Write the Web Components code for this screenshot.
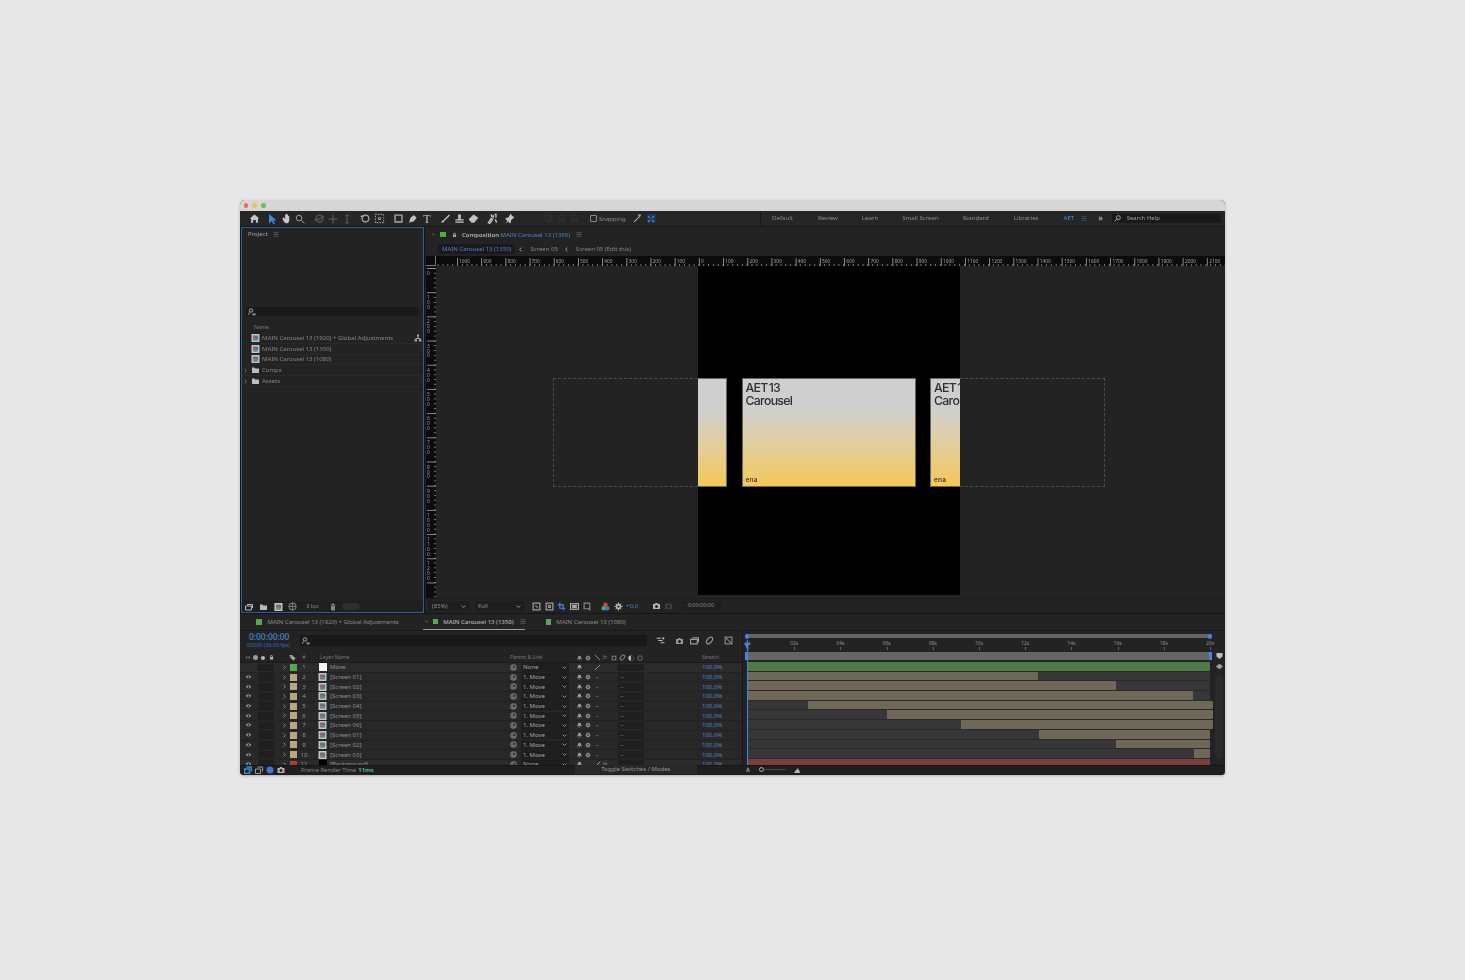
<!doctype html>
<html>
<head>
<meta charset="utf-8">
<title>After Effects</title>
<style>
  html, body { margin: 0; height: 100%; background: #e8e7e8; overflow: hidden; }
  body { padding: 200px 0 0 240px; box-sizing: border-box; font-family: "Noto Sans", sans-serif; }
</style>
</head>
<body>
<ae-window>
  <ae-toolbar></ae-toolbar>
  <ae-project slot="project"></ae-project>
  <ae-comp slot="comp"></ae-comp>
  <ae-timeline slot="timeline"></ae-timeline>
</ae-window>
<script>
const svg = (w, h, body, vb = '0 0 16 16') =>
  `<svg width="${w}" height="${h}" viewBox="${vb}" style="display:block">${body}</svg>`

const ICON = {
  home: 'M1 8 8 2l7 6h-2v6h-3v-4H6v4H3V8z',
  arrow: 'M4 1v13l3.5-3.2L10 15l2-1-2.5-4H14z',
  hand: 'M3 8c-1-1 0-3 1.5-1L6 9V3c0-1.5 1.5-1.5 1.5 0V2c0-1 1.500-1 1.500 0v1c0-1 1.500-1 1.500.5V5c0-1 1.500-1 1.500.5V10c0 3-2 5-4 5-3 0-4-3-6-7z',
  rect: 'M2 2h12v12H2zM4 4v8h8V4z',
  pen: 'M3 14 5 7l5-4 4 4-4 5zM7 8l2 2',
  brush: 'M2 14c0-2 1-3 2.5-3L13 2l1.5 1.5L6 12c0 2-2 2-4 2z',
  stamp: 'M6 2h4v3L9.5 9H14v2H2V9h4.5L6 5zM2 12.5h12V14H2z',
  eraser: 'M1 9 8 2l7 5-6 7H5z',
  roto: 'M2 14 6 8l2 2-4 5zM9 3v5M11 2h2v5M6 2l1 4M12 9l2 5',
  pin: 'M9 1l6 6-2 1-3 3v3l-2 1-2-3-4 4 3-5-3-2 1-2h3l2-3z',
  lock: 'M4 7V5a4 4 0 0 1 8 0v2h1v7H3V7zM6 7h4V5a2 2 0 0 0-4 0z',
  folder: 'M1 3h5l1 2h8v9H1z',
  trash: 'M3 3h10v2H3zM4 6h8v9H4zM6 1h4v2H6z',
  camera: 'M1 4h4l1-2h4l1 2h4v10H1zM8 6a3 3 0 1 0 .01 0z',
  tag: 'M1 2h6l8 8-5 5-8-8zM4 4v2h2V4z',
  shy: 'M4 8V6a4 4 0 0 1 8 0v2h2v2H2V8zM3 12h2v2H3zM7 12h2v2H7zM11 12h2v2h-2z',
  gear: 'M7 1h2v2l2 1 1.5-1.5 1 1L12 5l1 2h2v2h-2l-1 2 1.5 1.5-1 1L11 12l-2 1v2H7v-2l-2-1-1.5 1.5-1-1L4 11 3 9H1V7h2l1-2-1.5-1.5 1-1L5 4l2-1zM8 6a2 2 0 1 0 .01 0z',
  net: 'M6 1h4v4H6zM7 5h2v3h4v3h2v4h-5v-4h1V10H5v1h1v4H1v-4h2V8h4z',
  eye: 'M1 8c3-5 11-5 14 0-3 5-11 5-14 0zM8 5a3 3 0 1 0 .01 0z',
  shield: 'M1 1h14v8l-7 6-7-6z',
  nav: 'M0 8l4-4v8zM16 8l-4-4v8zM5 3h6v10H5z'
}
const solid = (name, w, h, color = '#a8a8a8') => svg(w, h, `<path fill="${color}" fill-rule="evenodd" d="${ICON[name]}"/>`)
const comp = (w = 9, h = 8) => svg(w, h,
  '<rect width="16" height="16" fill="#c4c4c4"/><rect x="3" y="3" width="10" height="10" fill="#6f7f90"/><circle cx="6" cy="6" r="2.5" fill="#c84a3c"/><circle cx="11" cy="7" r="2.5" fill="#3d6fc0"/><circle cx="8" cy="11" r="2.5" fill="#4ba35a"/>')
const stroke = (body, w = 11, h = 11, color = '#a8a8a8', sw = 1.5) =>
  svg(w, h, `<g fill="none" stroke="${color}" stroke-width="${sw}">${body}</g>`)
const menu = (color = '#8a8a8a') => svg(6, 5, `<path stroke="${color}" stroke-width="1.5" d="M0 2h16M0 8h16M0 14h16"/>`)
const chevron = (color = '#9a9a9a') => stroke('<path d="M5 2l6 6-6 6"/>', 5, 5, color, 3)
const down = () => stroke('<path d="M2 5l6 6 6-6"/>', 5, 5, '#9a9a9a', 3)
const BASE = `
  :host { box-sizing: border-box; }
  * { box-sizing: border-box; }
  svg { flex: none; }
`

class AeWindow extends HTMLElement {
  constructor() {
    super()
    this.attachShadow({ mode: 'open' }).innerHTML = `
      <style>${BASE}
        :host { display: flex; flex-direction: column; width: 985px; height: 575px; border-radius: 5px 5px 4px 4px;
          overflow: hidden; background: #141414; box-shadow: 0 1px 3px rgba(0,0,0,.25); font: 6px/1 "Noto Sans", sans-serif;
          color: #9b9b9b; filter: blur(.25px); }
        .title { height: 11px; background: #d7d6d5; display: flex; align-items: center; gap: 4.3px; padding-left: 3.5px; flex: none; }
        .title i { width: 4.5px; height: 4.5px; border-radius: 50%; }
        .main { display: flex; height: 386px; flex: none; }
      </style>
      <div class="title"><i style="background:#ec6a5e"></i><i style="background:#f4bf4f"></i><i style="background:#61c554"></i></div>
      <slot></slot>
      <div class="main"><slot name="project"></slot><slot name="comp"></slot></div>
      <slot name="timeline"></slot>`
  }
}

class AeToolbar extends HTMLElement {
  constructor() {
    super()
    const dim = '#555'
    const groups = [
      [solid('home', 11, 11, '#c4c4c4')],
      [solid('arrow', 12, 12, '#3f86dc'), solid('hand', 11, 11, '#c8c8c8'),
        stroke('<circle cx="6.5" cy="6.5" r="4.5"/><path d="M10 10l5 5"/>', 10, 10, '#a0a0a0')],
      [stroke('<circle cx="8" cy="8" r="5"/><path d="M1 11 15 5"/>', 11, 11, dim, 2),
        stroke('<path d="M8 1v14M1 8h14"/>', 10, 10, dim, 2), stroke('<path d="M5 2h6M8 2v12M5 14h6"/>', 10, 10, dim, 2)],
      [stroke('<path d="M3 4v4a5 5 0 1 0 2-4zM1 5h5"/>', 11, 11, '#a8a8a8', 1.8),
        stroke('<rect x="2" y="2" width="12" height="12" stroke-dasharray="2 2"/><circle cx="8" cy="8" r="1.5"/>', 11, 11)],
      [solid('rect', 11, 11), solid('pen', 11, 11, '#c0c0c0'), `<span class="t">T</span>`],
      [solid('brush', 11, 11, '#c4c4c4'), solid('stamp', 11, 11, '#c4c4c4'), solid('eraser', 11, 11, '#c4c4c4')],
      [stroke(`<path d="${ICON.roto}"/>`, 11, 11, '#c4c4c4', 2), solid('pin', 11, 11, '#c4c4c4')]
    ]
    const margins = [0, 4, 5, 4, 5, 5, 5]
    const tabs = [['Default', 0], ['Review', 25], ['Learn', 24], ['Small Screen', 24], ['Standard', 24], ['Libraries', 25]]
    this.attachShadow({ mode: 'open' }).innerHTML = `
      <style>${BASE}
        :host { display: flex; align-items: center; height: 16px; flex: none; background: #262626; padding-left: 7px;
          border-bottom: 1px solid #171717; white-space: nowrap; }
        .g { display: flex; }
        .c { width: 14px; height: 14px; display: flex; align-items: center; justify-content: center; }
        .t { font: 12px/1 "Liberation Serif", serif; color: #c0c0c0; margin-left: 2px; }
        .sn { display: flex; align-items: center; gap: 2px; width: 66px; color: #8d8d8d; }
        .box { width: 7px; height: 7px; border: 1px solid #8a8a8a; border-radius: 1px; }
        .blue { width: 9px; height: 9px; background: #1c3554; display: flex; align-items: center; justify-content: center; margin-left: 3px; }
        .tabs { display: flex; align-items: center; height: 100%; margin-left: 104px; border-left: 1px solid #171717; padding-left: 11px; color: #8d8d8d; font-size: 6.1px; }
        .tabs span { display: block; }
        .aet { color: #4a8ad4; margin-left: 25px; }
        .search { width: 109px; height: 9px; background: #191919; display: flex; align-items: center; gap: 6px; padding-left: 2px; color: #a2a2a2; font-size: 5.9px; }
      </style>
      ${groups.map((g, i) => `<div class="g" style="margin-left:${margins[i]}px;${i === 6 ? 'gap:3px' : ''}">${g.map((x) => `<div class="c">${x}</div>`).join('')}</div>`).join('')}
      <div class="g" style="margin-left:25px">
        ${[0, 1, 2].map(() => `<div class="c" style="opacity:.5;margin-right:-1px">${stroke('<path d="M3 3h10v10H3zM5 13l4-6 3 6"/>', 9, 9, '#444')}</div>`).join('')}
      </div>
      <div class="sn" style="margin-left:10px"><i class="box"></i><span>Snapping</span>
        <span style="margin-left:5px">${stroke('<path d="M2 14 13 3M9 2l5 0"/>', 9, 9, '#aaa', 2)}</span>
        <span class="blue">${stroke('<path d="M2 2l4 4M14 2l-4 4M2 14l4-4M14 14l-4-4"/>', 8, 8, '#4a8ad4', 2.5)}</span></div>
      <div class="tabs">
        ${tabs.map(([t, m]) => `<span style="margin-left:${m}px">${t}</span>`).join('')}
        <span class="aet">AET</span>
        <span style="margin-left:7px">${menu('#3f78bd')}</span>
        <span style="margin-left:11px;font-size:8px;color:#b0b0b0;margin-top:-2px;font-weight:600">»</span>
        <div class="search" style="margin-left:9px">${stroke('<circle cx="10" cy="6" r="4.5"/><path d="M6.5 9.5 1 15"/>', 7, 7, '#b5b5b5', 2)}<span>Search Help</span></div>
      </div>`
  }
}

class AeProject extends HTMLElement {
  constructor() {
    super()
    const rows = [
      [comp(), 'MAIN Carousel 13 (1920) + Global Adjustments', true],
      [comp(), 'MAIN Carousel 13 (1350)'],
      [comp(), 'MAIN Carousel 13 (1080)'],
      [solid('folder', 9, 8, '#bdbdbd'), 'Comps', false, true],
      [solid('folder', 9, 8, '#bdbdbd'), 'Assets', false, true]
    ]
    this.attachShadow({ mode: 'open' }).innerHTML = `
      <style>${BASE}
        :host { display: flex; flex-direction: column; width: 183px; height: 386px; margin-left: 1px; background: #232323;
          border: 1px solid #2f5f98; }
        .h { height: 12px; display: flex; align-items: center; gap: 5px; padding-left: 6px; color: #a5a5a5; flex: none; }
        .spacer { height: 67px; flex: none; }
        .s { height: 9px; margin: 0 4px; background: #191919; display: flex; align-items: center; padding-left: 2px; flex: none; }
        .name { height: 10px; margin-top: 7px; padding-left: 12px; font-size: 5.2px; color: #7c7c7c; flex: none; display: flex; align-items: center; }
        .r { height: 10.8px; display: flex; align-items: center; padding-left: 9px; gap: 2px; color: #868686; position: relative;
          border-bottom: 1px solid #292929; flex: none; white-space: nowrap; }
        .r .ch { position: absolute; left: 1px; top: 3px; }
        .r .net { position: absolute; right: 1px; top: 1px; }
        .grow { flex: 1; }
        .f { height: 11px; display: flex; align-items: center; background: #1f1f1f; flex: none; color: #7f7f7f; }
        .f span { display: flex; width: 14.5px; justify-content: center; }
      </style>
      <div class="h"><span>Project</span>${menu()}</div>
      <div class="spacer"></div>
      <div class="s">${stroke('<circle cx="6" cy="5" r="3.5"/><path d="M3 9 0 14M9 12h6l-3 3z"/>', 8, 8, '#aaa', 2)}</div>
      <div class="name">Name</div>
      ${rows.map(([ic, t, net, folder]) => `<div class="r">${folder ? `<span class="ch">${chevron('#777')}</span>` : ''}${ic}<span>${t}</span>${net ? `<span class="net">${solid('net', 8, 8, '#a8a8a8')}</span>` : ''}</div>`).join('')}
      <div class="grow"></div>
      <div class="f">
        <span>${stroke('<path d="M1 6h12v8H1zM4 3h11v7"/>', 10, 8, '#b8b8b8', 2)}</span>
        <span>${solid('folder', 9, 8, '#b8b8b8')}</span>
        <span>${comp()}</span>
        <span>${stroke('<circle cx="8" cy="8" r="6"/><path d="M1 8h14M8 1v14"/>', 9, 9, '#777', 2)}</span>
        <span style="width:26px;font-size:5.2px;align-items:center;height:100%;line-height:11px">8 bpc</span>
        <span>${solid('trash', 8, 8, '#858585')}</span>
        <i style="width:18px;height:7px;border-radius:4px;background:#2e2e2e;margin-left:1px"></i>
      </div>`
  }
}

class AeRuler extends HTMLElement {
  constructor() {
    super()
    const step = 24.2
    const vertical = this.hasAttribute('vertical')
    const labels = []
    if (vertical) {
      for (let i = 0; i < 13; i++) {
        labels.push(`<span style="top:${5 + i * step}px">${String(i * 100).split('').join('<br>')}</span>`)
      }
    } else {
      for (let i = 0; i < 32; i++) {
        labels.push(`<span style="left:${22 + i * step}px">${Math.abs(1000 - i * 100)}</span>`)
      }
    }
    this.attachShadow({ mode: 'open' }).innerHTML = `
      <style>${BASE}
        :host { display: block; position: relative; overflow: hidden; background-color: #0c0c0c; flex: none; color: #a0a0a0; font-size: 4.8px; line-height: 5px; }
        :host(:not([vertical])) { height: 10px; background-image:
          linear-gradient(90deg, #8c8c8c 1px, transparent 1px),
          linear-gradient(90deg, #777 1px, transparent 1px);
          background-size: ${step}px 8px, ${step / 5}px 2px; background-position: 21px 100%, 21px 100%; background-repeat: repeat-x; }
        :host([vertical]) { width: 10px; background-image:
          linear-gradient(#8c8c8c 1px, transparent 1px),
          linear-gradient(#777 1px, transparent 1px);
          background-size: 9px ${step}px, 2px ${step / 5}px; background-position: 100% 2px, 100% 2px; background-repeat: repeat-y; }
        span { position: absolute; top: 2.5px; padding-left: 1px; }
        :host([vertical]) span { left: 1px; text-align: center; padding: 0; line-height: 4.9px; }
      </style>${labels.join('')}`
  }
}

class AeComp extends HTMLElement {
  constructor() {
    super()
    const card = (w, text, extra = '') => `<div class="card" style="width:${w}px;${extra}">${text ? '<div class="ttl">AET 13<br>Carousel</div><div class="ena">ena</div>' : ''}</div>`
    this.attachShadow({ mode: 'open' }).innerHTML = `
      <style>${BASE}
        :host { display: flex; flex-direction: column; width: 800px; height: 386px; background: #232323; margin-left: 1px; }
        .h { height: 15px; display: flex; align-items: center; padding-left: 7px; flex: none; color: #b4b4b4; white-space: nowrap; }
        .green { width: 5.5px; height: 5.5px; background: #55a84f; display: block; }
        .h b { font-weight: 600; color: #b8b8b8; }
        .blue { color: #4a85c9; }
        .crumb { height: 14px; display: flex; align-items: center; flex: none; color: #858585; white-space: nowrap; }
        .crumb .on { background: #1a1a1a; color: #4a85c9; height: 10px; display: flex; align-items: center; padding: 0 4px; margin-left: 13px; }
        .rh { display: flex; height: 10px; flex: none; padding-left: 1px; }
        .corner { width: 10px; height: 10px; background: #0c0c0c; border-right: 1px solid #777; border-bottom: 1px solid #777; flex: none; }
        ae-ruler:not([vertical]) { flex: 1; }
        .vw { display: flex; height: 332px; flex: none; padding-left: 1px; }
        .stage { position: relative; flex: 1; padding-left: 262px; }
        .black { width: 262px; height: 329px; background: #000; overflow: hidden; display: flex; align-items: flex-start; padding-top: 112px; gap: 14.5px; }
        .frame { position: absolute; top: 112px; height: 109px; width: 145px; border: 1px dashed #4c4c4c; }
        .card { flex: none; height: 109px; position: relative; overflow: hidden; border: 1px solid #6d675a;
          background: linear-gradient(#cfcfcf 0, #cfcfcf 28%, #e0cfa2 58%, #f5c858 100%); color: #2e2e2e; }
        .ttl { position: absolute; left: 3px; top: 3px; font: 500 12.3px/12.7px Inter, sans-serif; letter-spacing: -.7px; word-spacing: -1.5px; white-space: nowrap; }
        .ena { position: absolute; left: 3px; bottom: 3px; font: 500 6.5px/1 Inter, sans-serif; letter-spacing: .3px; }
        .f { height: 15px; flex: none; display: flex; align-items: center; border-top: 1px solid #1c1c1c; color: #8d8d8d; white-space: nowrap; }
        .sel { height: 10px; background: #1e1e1e; display: flex; align-items: center; justify-content: space-between; padding: 0 4px; }
        .ib { display: flex; width: 12.8px; justify-content: center; }
      </style>
      <div class="h">${stroke('<path d="M3 3l10 10M13 3 3 13"/>', 3, 3, '#888', 3)}
        <i class="green" style="margin-left:5px"></i>
        <span style="margin-left:6px">${solid('lock', 5, 6, '#a5a5a5')}</span>
        <b style="margin-left:5.5px">Composition</b><span class="blue" style="margin-left:1.5px">MAIN Carousel 13 (1350)</span>
        <span style="margin-left:6px">${menu()}</span></div>
      <div class="crumb"><span class="on">MAIN Carousel 13 (1350)</span>
        <span style="margin:0 6px 0 3px;transform:scaleX(-1)">${chevron('#aaa')}</span><span style="margin-left:1px">Screen 05</span>
        <span style="margin:0 6px;transform:scaleX(-1)">${chevron('#aaa')}</span><span style="margin-left:1px">Screen 05 (Edit this)</span></div>
      <div class="rh"><div class="corner"></div><ae-ruler></ae-ruler></div>
      <div class="vw"><ae-ruler vertical></ae-ruler>
        <div class="stage">
          <div class="black">${card(29, false, 'border-left:0')}${card(174, true)}${card(60, true)}</div>
          <div class="frame" style="left:117px;border-right:0"></div>
          <div class="frame" style="left:524px;border-left:0"></div>
        </div></div>
      <div class="f">
        <div class="sel" style="width:42px;margin-left:3px"><span>(85%)</span>${down()}</div>
        <div class="sel" style="width:50px;margin-left:5px;padding-left:3px"><span>Full</span>${down()}</div>
        <div style="display:flex;margin-left:5px">
          <span class="ib">${stroke('<rect x="2" y="2" width="12" height="12"/><path d="M6 6l4 4"/>', 9, 9, '#aaa', 2)}</span>
          <span class="ib">${stroke('<rect x="2" y="2" width="12" height="12"/><circle cx="8" cy="8" r="2"/>', 9, 9, '#aaa', 2)}</span>
          <span class="ib">${stroke('<path d="M5 1v10h10M1 5h10v10"/>', 9, 9, '#4a8ad4', 2)}</span>
          <span class="ib">${stroke('<rect x="1" y="3" width="14" height="10"/><rect x="5" y="6" width="6" height="4" fill="#aaa"/>', 9, 9, '#aaa', 2)}</span>
          <span class="ib">${stroke('<path d="M2 2h10v10H2zM10 12l3 3"/>', 9, 9, '#888', 2)}</span>
        </div>
        <span style="margin-left:7px">${svg(9, 9, '<circle cx="8" cy="5" r="4" fill="#d6453a"/><circle cx="5" cy="11" r="4" fill="#4fae55"/><circle cx="11" cy="11" r="4" fill="#3f78d0"/>')}</span>
        <span style="margin-left:4px">${solid('gear', 9, 9, '#b5b5b5')}</span>
        <span class="blue" style="margin-left:3px">+0,0</span>
        <span style="margin-left:14px">${solid('camera', 9, 8, '#b5b5b5')}</span>
        <span style="margin-left:3px">${solid('camera', 9, 8, '#3d3d3d')}</span>
        <div class="sel" style="width:40px;margin-left:8px;justify-content:center;font-size:5.5px">0:00:00:00</div>
      </div>`
  }
}

const COLUMNS = '16px 2px 8px 8px 6px 8px 10px 12px 8px 9px 183px 7px 4px 48px 6px 8px 10px 8px 8px 9px 8px 9px 9px 58px 40px'

class AeLayer extends HTMLElement {
  connectedCallback() {
    const a = (k) => this.getAttribute(k)
    const solidLayer = a('kind') === 'solid'
    const cell = (x = '', cls = '') => `<div class="${cls}">${x}</div>`
    this.attachShadow({ mode: 'open' }).innerHTML = `
      <style>${BASE}
        :host { display: grid; grid-template-columns: ${COLUMNS}; height: 9.7px; align-items: center; background: #282828;
          border-bottom: 1px solid #222; color: #909090; white-space: nowrap; }
        :host([kind="solid"]) { background: #2b2b2b; }
        div { height: 100%; display: flex; align-items: center; justify-content: center; }
        .k { background: #1f1f1f; margin: .5px 0; height: auto; align-self: stretch; }
        .l { justify-content: flex-start; padding-left: 3px; }
        .sel { background: #1e1e1e; justify-content: space-between; padding: 0 2px; height: 8.5px; color: #a5a5a5; }
        .st { justify-content: flex-start; color: #4a85c9; }
        i { display: block; width: 7px; height: 7px; background: ${a('color')}; }
      </style>
      ${cell(a('n') === '1' ? '' : solid('eye', 7, 6, '#a8a8a8'))}${cell()}${cell('', 'k')}${cell('', 'k')}${cell()}
      ${cell(chevron('#8a8a8a'))}${cell('<i></i>')}${cell(a('n'))}${cell()}
      ${cell(solidLayer ? svg(8, 8, `<rect width="16" height="16" fill="${a('swatch')}"/>`) : comp())}
      ${cell(a('name'), 'l')}
      ${cell(stroke('<circle cx="8" cy="8" r="6"/><path d="M8 5a3 3 0 1 0 3 3"/>', 7, 7, '#777', 2.5))}${cell()}
      ${cell(`<span>${a('parent')}</span>${down()}`, 'sel')}${cell()}
      ${cell(solid('shy', 7, 6, '#a5a5a5'))}
      ${cell(solidLayer ? '' : solid('gear', 6, 6, '#9a9a9a'))}
      ${cell(solidLayer ? stroke('<path d="M2 14 14 2"/>', 7, 7, '#aaa', 2) : '–')}
      ${cell(a('fx') ? '<em style="font-size:6px">fx</em>' : '')}${cell()}
      ${cell(solidLayer ? '' : '–', 'k')}${cell('', 'k')}${cell('', 'k')}${cell()}${cell('100,0%', 'st')}`
  }
}

class AeTimeline extends HTMLElement {
  constructor() {
    super()
    const layers = [
      ['Move', '#55a84f', 'solid', 'None', '#f2f2f2', 747, 1210, '#4d7a4b'],
      ['[Screen 01]', '#b7a682', 'comp', '1. Move', '', 747, 1038, '#6f6757'],
      ['[Screen 02]', '#b7a682', 'comp', '1. Move', '', 747, 1116, '#6f6757'],
      ['[Screen 03]', '#b7a682', 'comp', '1. Move', '', 747, 1193, '#6f6757'],
      ['[Screen 04]', '#b7a682', 'comp', '1. Move', '', 808, 1213, '#6f6757'],
      ['[Screen 05]', '#b7a682', 'comp', '1. Move', '', 887, 1213, '#6f6757'],
      ['[Screen 06]', '#b7a682', 'comp', '1. Move', '', 961, 1213, '#6f6757'],
      ['[Screen 01]', '#b7a682', 'comp', '1. Move', '', 1039, 1210, '#6f6757'],
      ['[Screen 02]', '#b7a682', 'comp', '1. Move', '', 1116, 1210, '#6f6757'],
      ['[Screen 03]', '#b7a682', 'comp', '1. Move', '', 1194, 1210, '#6f6757'],
      ['[Background]', '#b03a36', 'solid', 'None', '#000', 747, 1210, '#7c3d3b']
    ]
    const ticks = ['0s', '02s', '04s', '06s', '08s', '10s', '12s', '14s', '16s', '18s', '20s']
    this.attachShadow({ mode: 'open' }).innerHTML = `
      <style>${BASE}
        :host { display: flex; flex-direction: column; flex: 1; min-height: 0; height: 162px; background: #232323; border-top: 1px solid #141414; white-space: nowrap; color: #8d8d8d; }
        .tabs { height: 17px; display: flex; align-items: center; flex: none; border-bottom: 1px solid #1a1a1a; }
        .green { width: 5.5px; height: 5.5px; background: #55a84f; display: block; flex: none; }
        .tab { display: flex; align-items: center; height: 100%; }
        .tab.on { color: #b6b6b6; border-bottom: 1.5px solid #a0a0a0; width: 102px; margin-left: 24px; padding-left: 2px; font-weight: 500; }
        .body { flex: 1; display: flex; min-height: 0; }
        .left { width: 503px; display: flex; flex-direction: column; overflow: hidden; border-right: 1px solid #161616; flex: none; }
        .ctl { height: 22px; flex: none; display: flex; position: relative; }
        .tc { width: 60px; padding: 1px 0 0 9px; flex: none; }
        .tc b { display: block; font-size: 8.4px; font-weight: 500; color: #4a8ad4; line-height: 10px; }
        .tc small { display: block; font-size: 5.4px; line-height: 6px; color: #3a6ca8; margin-left: -2px; }
        .sb { width: 347px; height: 11px; background: #191919; margin-top: 4px; display: flex; align-items: center; padding-left: 2px; flex: none; }
        .ic { display: flex; align-items: center; height: 11px; margin-top: 4px; margin-left: 6px; }
        .ic span { display: flex; width: 15px; justify-content: center; }
        .hd { display: grid; grid-template-columns: ${COLUMNS}; height: 10px; flex: none; align-items: center; font-size: 5.2px; color: #777; border-bottom: 1px solid #1a1a1a; }
        .hd div { display: flex; justify-content: center; align-items: center; }
        .hd .l { justify-content: flex-start; }
        .rows { flex: 1; overflow: hidden; min-height: 0; }
        .right { flex: 1; display: flex; flex-direction: column; position: relative; overflow: hidden; }
        .nav { height: 9px; flex: none; padding: 3px 13px 0 2px; position: relative; }
        .nav i { display: block; height: 4px; background: #666; border-radius: 2px; position: relative; }
        .nav i::before, .nav i::after { content: ""; position: absolute; top: -.5px; width: 4px; height: 5px; border-radius: 50%; background: #3f86dc; }
        .nav i::before { left: 0; } .nav i::after { right: 0; }
        .time { height: 12px; flex: none; margin: 0 13px 0 0; position: relative; font-size: 5px; color: #909090; }
        .time span { position: absolute; top: 1px; transform: translateX(-50%); padding-bottom: 4px; }
        .time span::after { content: ""; position: absolute; left: 50%; bottom: 0; height: 3px; width: 1px; background: #666; }
        .work { height: 8px; flex: none; background: #666; margin: 0 13px 2px 2px; position: relative;
          border-left: 3px solid #3f86dc; border-right: 3px solid #3f86dc; }
        .tracks { flex: 1; min-height: 0; overflow: hidden; }
        .tr { height: 9.7px; background: #373737; border-bottom: 1px solid #2a2a2a; margin: 0 15px 0 4px; display: flex; }
        .tr b { display: block; height: 8.7px; border-radius: 0 1px 1px 0; flex: none; }
        .head { position: absolute; left: 1px; top: 9px; width: 0; height: 125px; border-left: 1px solid #3f86dc; margin-left: 3px; }
        .head::before { content: ""; position: absolute; left: -4px; top: 3px; border: 3.5px solid transparent; border-top: 6px solid #3f86dc; }
        .side { position: absolute; right: 0; top: 21px; width: 12px; display: flex; flex-direction: column; gap: 3px; align-items: center; }
        .scroll { position: absolute; right: 2px; top: 44px; width: 8px; height: 84px; background: #2a2a2a; border-radius: 3px; }
        .f { height: 10px; flex: none; background: #1f1f1f; display: flex; align-items: center; border-top: 1px solid #161616; padding: 0 0 2px 2px; }
        .f .bi { display: flex; width: 11px; justify-content: center; }
      </style>
      <div class="tabs">
        <span class="green" style="margin-left:16px"></span><span style="margin-left:6px">MAIN Carousel 13 (1920) + Global Adjustments</span>
        <div class="tab on">${stroke('<path d="M3 3l10 10M13 3 3 13"/>', 3, 3, '#888', 3)}<i class="green" style="margin-left:5px"></i><span style="margin-left:5px">MAIN Carousel 13 (1350)</span><span style="margin-left:6px">${menu()}</span></div>
        <span class="green" style="margin-left:21px"></span><span style="margin-left:5px">MAIN Carousel 13 (1080)</span>
      </div>
      <div class="body">
        <div class="left">
          <div class="ctl">
            <div class="tc"><b>0:00:00:00</b><small>00000 (30.00 fps)</small></div>
            <div class="sb">${stroke('<circle cx="6" cy="5" r="3.5"/><path d="M3 9 0 14M9 12h6l-3 3z"/>', 8, 8, '#aaa', 2)}</div>
            <div class="ic">
              <span>${stroke('<path d="M1 4h8M4 8h8M8 12h7"/><circle cx="13" cy="4" r="1"/>', 9, 9, '#bbb', 2)}</span>
              <span style="margin-left:4px">${solid('camera', 9, 8, '#989898')}</span>
              <span>${stroke('<path d="M1 6h12v8H1zM4 3h11v8"/>', 9, 9, '#9a9a9a', 2)}</span>
              <span>${stroke('<ellipse cx="8" cy="8" rx="4" ry="7" transform="rotate(40 8 8)"/>', 9, 9, '#9a9a9a', 2)}</span>
              <span style="margin-left:4px">${stroke('<rect x="2" y="2" width="12" height="12"/><path d="M2 2l12 12"/>', 9, 9, '#8a8a8a', 2)}</span>
            </div>
          </div>
          <div class="hd">
            <div style="grid-column:1 / 5;justify-content:flex-start;gap:2px;padding-left:5px">${solid('eye', 6, 5, '#999')}<i style="width:5px;height:5px;border-radius:50%;background:#999"></i><i style="width:4px;height:4px;border-radius:50%;background:#bbb;margin-left:1px"></i><span style="margin-left:2px">${solid('lock', 5, 5, '#bbb')}</span></div>
            <div style="grid-column:6 / 8;padding-left:6px">${solid('tag', 7, 7, '#aaa')}</div>
            <div>#</div><div></div><div style="grid-column:10 / 12;padding-left:2px" class="l">Layer Name</div>
            <div style="grid-column:12 / 15;justify-content:flex-start">Parent &amp; Link</div><div></div>
            <div>${solid('shy', 7, 6, '#999')}</div><div>${solid('gear', 6, 6, '#999')}</div>
            <div>${stroke('<path d="M2 2l12 12"/>', 7, 7, '#999', 2)}</div><div><em>fx</em></div>
            <div>${solid('rect', 6, 6, '#999')}</div>
            <div>${stroke('<ellipse cx="8" cy="8" rx="4" ry="7" transform="rotate(40 8 8)"/>', 7, 7, '#999', 2)}</div>
            <div>${svg(6, 6, '<circle cx="8" cy="8" r="7" fill="#bbb"/><path d="M8 1a7 7 0 0 1 0 14z" fill="#222"/>')}</div>
            <div>${stroke('<circle cx="8" cy="8" r="6"/>', 6, 6, '#888', 2)}</div>
            <div></div><div style="justify-content:flex-start">Stretch</div>
          </div>
          <div class="rows">
            ${layers.map((l, i) => `<ae-layer n="${i + 1}" name="${l[0]}" color="${l[1]}" kind="${l[2]}" parent="${l[3]}" swatch="${l[4]}"${i === 10 ? ' fx="1"' : ''}></ae-layer>`).join('')}
          </div>
        </div>
        <div class="right">
          <div class="nav"><i></i></div>
          <div class="time">${ticks.map((t, i) => `<span style="left:${5 + i * 46.2}px">${t}</span>`).join('')}</div>
          <div class="work"></div>
          <div class="tracks">
            ${layers.map((l) => `<div class="tr"><b style="margin-left:${l[5] - 747}px;width:${l[6] - l[5]}px;background:${l[7]}"></b></div>`).join('')}
          </div>
          <div class="scroll"></div>
          <div class="head"></div>
          <div class="side">${solid('shield', 7, 8, '#bdbdbd')}${solid('nav', 9, 7, '#b0b0b0')}</div>
        </div>
      </div>
      <div class="f">
        <span class="bi">${stroke('<path d="M1 6h10v9H1zM5 2h10v9"/>', 8, 8, '#3f86dc', 3)}</span>
        <span class="bi">${stroke('<path d="M1 6h10v9H1zM5 2h10v9"/>', 8, 8, '#9a9a9a', 2)}</span>
        <span class="bi">${svg(8, 8, '<circle cx="8" cy="8" r="7" fill="#3f78c8"/>')}</span>
        <span class="bi">${solid('camera', 8, 8, '#b0b0b0')}</span>
        <span style="margin-left:15px;color:#858585">Frame Render Time</span><span style="margin-left:2px;color:#5cc9a2;font-weight:600">11ms</span>
        <div style="width:122px;height:9px;background:#282828;margin-left:201px;text-align:center;line-height:9px;color:#959595">Toggle Switches / Modes</div>
        <span style="margin-left:48px;display:flex;align-items:center;gap:8px">${solid('stamp', 6, 5, '#b0b0b0')}<i style="width:5px;height:5px;border-radius:50%;border:1px solid #aaa"></i></span>
        <i style="width:22px;height:1px;background:#444"></i>
        <span style="margin-left:6px">${svg(10, 6, '<path fill="#b5b5b5" d="M0 16 5 8h2l1-4 3 0 1 4h2l2 8z"/>')}</span>
      </div>`
  }
}

customElements.define('ae-window', AeWindow)
customElements.define('ae-toolbar', AeToolbar)
customElements.define('ae-project', AeProject)
customElements.define('ae-ruler', AeRuler)
customElements.define('ae-comp', AeComp)
customElements.define('ae-layer', AeLayer)
customElements.define('ae-timeline', AeTimeline)
</script>
</body>
</html>
